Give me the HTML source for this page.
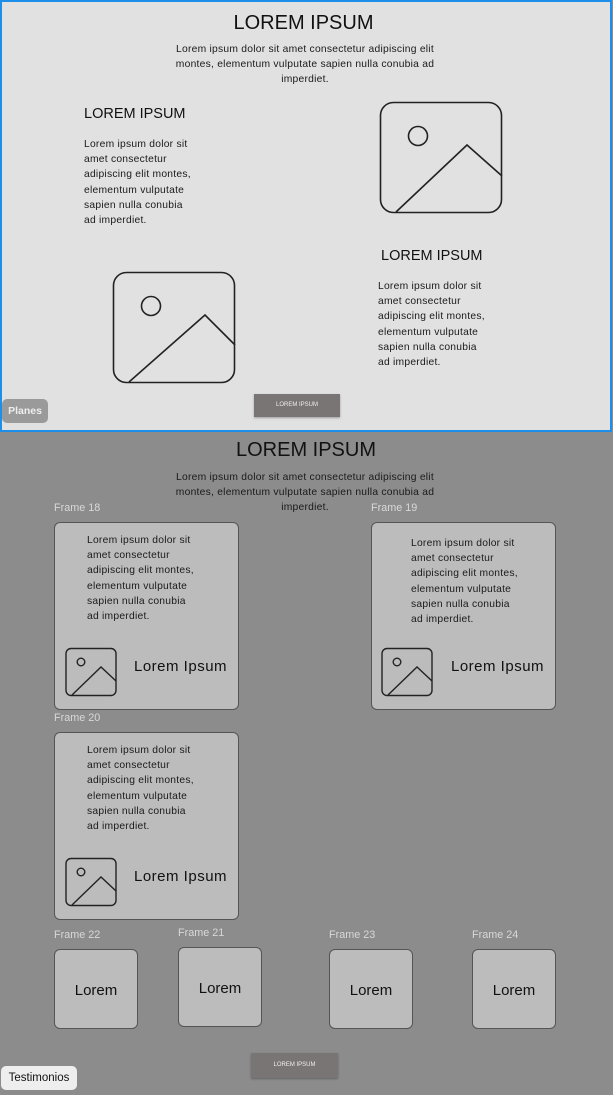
<!DOCTYPE html>
<html><head><meta charset="utf-8"><style>
*{margin:0;padding:0;box-sizing:border-box}
body{width:613px;height:1095px;position:relative;background:#8c8c8c;font-family:"Liberation Sans",sans-serif;overflow:hidden;color:#111}
.a{position:absolute}
.top{left:0;top:0;width:612px;height:432px;background:#e1e1e1;border:2px solid #1e8fe8}
.h{font-size:20px;white-space:nowrap}
.p{font-size:10.3px;line-height:15.2px;white-space:nowrap;color:#1a1a1a;letter-spacing:0.24px}
.c{text-align:center}
.card{background:#bcbcbc;border:1px solid #555;border-radius:6px}
.lbl{font-size:10.8px;color:#d8d8d8}
.btn{background:#7a7575;color:#eee;font-size:6px;text-align:center;box-shadow:0 1px 2px rgba(0,0,0,.3)}
.big{font-size:15px;color:#111;letter-spacing:0.5px}
.sm{font-size:15px;color:#111}
</style></head><body>
<div class="a top"></div>
<div class="a h c" style="left:0;width:607px;top:12px">LOREM IPSUM</div>
<div class="a p c" style="left:0;width:610px;top:42px">Lorem ipsum dolor sit amet consectetur adipiscing elit<br>montes, elementum vulputate sapien nulla conubia ad<br>imperdiet.</div>
<div class="a" style="left:84px;top:106px;font-size:14.5px">LOREM IPSUM</div>
<div class="a p" style="left:84px;top:137px">Lorem ipsum dolor sit<br>amet consectetur<br>adipiscing elit montes,<br>elementum vulputate<br>sapien nulla conubia<br>ad imperdiet.</div>
<div class="a" style="left:381px;top:248px;font-size:14.5px">LOREM IPSUM</div>
<div class="a p" style="left:378px;top:279px">Lorem ipsum dolor sit<br>amet consectetur<br>adipiscing elit montes,<br>elementum vulputate<br>sapien nulla conubia<br>ad imperdiet.</div>
<svg class="a" style="left:0;top:0" width="613" height="1095" fill="none" stroke="#222" stroke-width="1.6">
<rect x="380.5" y="102.5" width="121" height="110" rx="13"/>
<circle cx="418" cy="136" r="9.5"/>
<path d="M396 212 L467 145 L502 176"/>
<rect x="113.5" y="272.5" width="121" height="110" rx="13"/>
<circle cx="151" cy="306" r="9.5"/>
<path d="M129 382 L205 315 L235 345"/>
</svg>
<div class="a btn" style="left:254px;top:394px;width:86px;height:23px;line-height:23px">LOREM IPSUM</div>
<div class="a" style="left:2px;top:399px;width:46px;height:24px;background:#9a9a9a;border-radius:5px;color:#eee;font-weight:bold;font-size:10.5px;line-height:24px;text-align:center">Planes</div>

<div class="a h c" style="left:0;width:612px;top:439px">LOREM IPSUM</div>
<div class="a p c" style="left:0;width:610px;top:470px">Lorem ipsum dolor sit amet consectetur adipiscing elit<br>montes, elementum vulputate sapien nulla conubia ad<br>imperdiet.</div>

<div class="a lbl" style="left:54px;top:502px">Frame 18</div>
<div class="a card" style="left:54px;top:522px;width:185px;height:188px"></div>
<div class="a p" style="left:87px;top:533px">Lorem ipsum dolor sit<br>amet consectetur<br>adipiscing elit montes,<br>elementum vulputate<br>sapien nulla conubia<br>ad imperdiet.</div>
<div class="a big" style="left:134px;top:658px">Lorem Ipsum</div>

<div class="a lbl" style="left:371px;top:502px">Frame 19</div>
<div class="a card" style="left:371px;top:522px;width:185px;height:188px"></div>
<div class="a p" style="left:411px;top:536px">Lorem ipsum dolor sit<br>amet consectetur<br>adipiscing elit montes,<br>elementum vulputate<br>sapien nulla conubia<br>ad imperdiet.</div>
<div class="a big" style="left:451px;top:658px">Lorem Ipsum</div>

<div class="a lbl" style="left:54px;top:712px">Frame 20</div>
<div class="a card" style="left:54px;top:732px;width:185px;height:188px"></div>
<div class="a p" style="left:87px;top:743px">Lorem ipsum dolor sit<br>amet consectetur<br>adipiscing elit montes,<br>elementum vulputate<br>sapien nulla conubia<br>ad imperdiet.</div>
<div class="a big" style="left:134px;top:868px">Lorem Ipsum</div>
<svg class="a" style="left:0;top:0" width="613" height="1095" fill="none" stroke="#222" stroke-width="1.4">
<rect x="66" y="648.5" width="50" height="47" rx="5"/><circle cx="81" cy="662" r="3.8"/><path d="M72 695 L101 667 L116 681"/>
<rect x="382" y="648.5" width="50" height="47" rx="5"/><circle cx="397" cy="662" r="3.8"/><path d="M388 695 L417 667 L432 681"/>
<rect x="66" y="858.5" width="50" height="47" rx="5"/><circle cx="81" cy="872" r="3.8"/><path d="M72 905 L101 877 L116 891"/>
</svg>

<div class="a lbl" style="left:54px;top:929px">Frame 22</div>
<div class="a card sm c" style="left:54px;top:949px;width:84px;height:80px;line-height:82px">Lorem</div>
<div class="a lbl" style="left:178px;top:927px">Frame 21</div>
<div class="a card sm c" style="left:178px;top:947px;width:84px;height:80px;line-height:82px">Lorem</div>
<div class="a lbl" style="left:329px;top:929px">Frame 23</div>
<div class="a card sm c" style="left:329px;top:949px;width:84px;height:80px;line-height:82px">Lorem</div>
<div class="a lbl" style="left:472px;top:929px">Frame 24</div>
<div class="a card sm c" style="left:472px;top:949px;width:84px;height:80px;line-height:82px">Lorem</div>

<div class="a btn" style="left:251px;top:1053px;width:87px;height:25px;line-height:25px">LOREM IPSUM</div>
<div class="a" style="left:1px;top:1066px;width:76px;height:24px;background:#eee;border-radius:5px;font-size:11.5px;line-height:24px;text-align:center">Testimonios</div>
</body></html>
